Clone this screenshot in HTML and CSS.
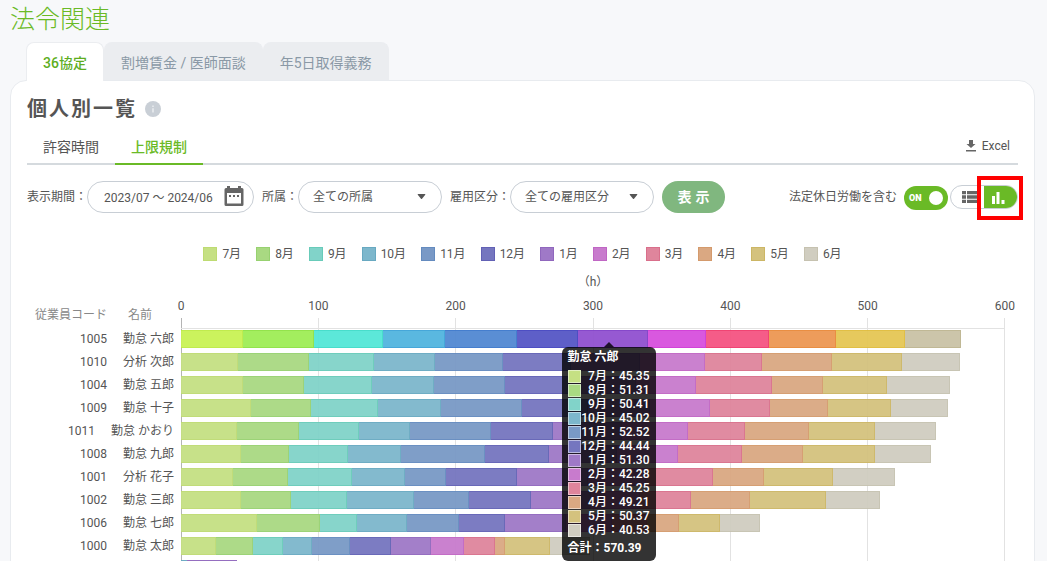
FILE: index.html
```
<!DOCTYPE html>

<html lang="ja">
	<head>
		<meta charset="utf-8">
		<meta name="viewport" content="width=device-width, initial-scale=1">
		<title>法令関連</title>
		<link rel="stylesheet" href="styles.css">
	</head>

	<body>
		<h1 class="page-title">法令関連</h1>

		<nav class="tabs">
			<a class="tab active" href="#">36協定</a>
			<a class="tab" href="#">割増賃金 / 医師面談</a>
			<a class="tab" href="#">年5日取得義務</a>
		</nav>

		<main class="card">
			<div class="heading">
				<h2>個人別一覧</h2>
				<svg class="info" viewBox="0 0 16 16"><circle cx="8" cy="8" r="8" fill="#c9cfd6"/><path d="M7.2 4.4h1.6v1.6H7.2zM7.2 7.2h1.6v4.4H7.2z" fill="#e9ecef"/></svg>
			</div>

			<div class="subbar">
				<a class="subtab" href="#">許容時間</a>
				<a class="subtab active" href="#">上限規制</a>
				<button class="excel" type="button">
					<svg viewBox="0 0 12 12"><path d="M4 0h4v4h2.500L6 8 1.500 4H4zM1 10h10v1.500H1z" fill="#666"/></svg>
					Excel
				</button>
			</div>

			<form class="filters">
				<label for="period">表示期間：</label>
				<div class="field period">
					<input id="period" type="text" value="2023/07 ～ 2024/06">
					<svg class="calendar" viewBox="0 0 20 20"><path fill-rule="evenodd" d="M3 0h3v2h8V0h3v2h1q1.500 0 1.500 1.500v15Q19.500 20 18 20H2Q.5 20 .5 18.500v-15Q.5 2 2 2h1zM3 7v10.500h14V7zM5 9h2v2H5zM9 9h2v2H9zM13 9h2v2h-2z" fill="#666"/></svg>
				</div>
				<label for="dept">所属：</label>
				<div class="field">
					<select id="dept"><option>全ての所属</option></select>
					<svg class="arrow" viewBox="0 0 10 6"><path d="M1 0h8q1 .3.500 1L5.600 5.600q-.6.500-1.200 0L.5 1Q0 .3 1 0z" fill="#555"/></svg>
				</div>
				<label for="kind">雇用区分：</label>
				<div class="field">
					<select id="kind"><option>全ての雇用区分</option></select>
					<svg class="arrow" viewBox="0 0 10 6"><path d="M1 0h8q1 .3.500 1L5.600 5.600q-.6.500-1.200 0L.5 1Q0 .3 1 0z" fill="#555"/></svg>
				</div>
				<button class="show" type="button">表示</button>

				<div class="options">
					<label for="holiday">法定休日労働を含む</label>
					<div class="toggle">
						<input id="holiday" type="checkbox" checked>
						<span class="toggle-text">ON</span>
					</div>
					<div class="views">
						<button class="view" type="button" aria-label="表">
							<svg viewBox="0 0 17 12"><path d="M0 0h4v3.300H0zM5 0h12v3.300H5zM0 4.300h4v3.400H0zM5 4.300h12v3.400H5zM0 8.700h4V12H0zM5 8.700h12V12H5z" fill="#666"/></svg>
						</button>
						<button class="view active" type="button" aria-label="グラフ">
							<svg viewBox="0 0 14 12"><path d="M1 4h3v8H1zM5.500 0h3v12h-3zM10.500 8h3v4h-3z" fill="#fff"/></svg>
						</button>
						<span class="marker"></span>
					</div>
				</div>
			</form>

			<section class="chart">
				<ul class="legend" id="legend"></ul>
				<div class="unit">（h）</div>
				<div class="axis">
					<div class="axis-head"><span>従業員コード</span><span>名前</span></div>
					<div class="ticks">
						<span>0</span><span>100</span><span>200</span><span>300</span><span>400</span><span>500</span><span>600</span>
					</div>
				</div>
				<div class="plot">
					<div class="lines"><i></i><i></i><i></i><i></i><i></i><i></i></div>
					<div class="rows" id="rows"></div>
					<div class="tip">
						<b>勤怠 六郎</b>
						<ul id="tip"></ul>
						<b>合計：570.39</b>
					</div>
				</div>
			</section>
		</main>

		<script src="chart.js"></script>
	</body>
</html>
```
FILE: styles.css
```
* {
	box-sizing: border-box;
}
body {
	margin: 0;
	height: 100vh;
	overflow: hidden;
	background: #f7f8fa;
	color: #555;
	font-family: Roboto, "Noto Sans CJK JP", sans-serif;
	font-size: 12px;
	line-height: 16px;
}
a {
	color: inherit;
	text-decoration: none;
}
button, input, select {
	font: inherit;
	color: inherit;
	padding: 0;
	border: 0;
	background: none;
}
ul {
	list-style: none;
	margin: 0;
	padding: 0;
}
.page-title {
	margin: 0;
	padding: 0 10px;
	height: 42px;
	line-height: 40px;
	font-size: 25px;
	font-weight: 300;
	color: #6aba26;
}

/* tabs */
.tabs {
	display: flex;
	padding-left: 26px;
}
.tab {
	height: 38px;
	padding: 0 16px;
	border: 1px solid #ebedf0;
	border-bottom: 0;
	border-radius: 8px 8px 0 0;
	background: #ebedf0;
	color: #8a99a6;
	font-size: 14px;
	line-height: 40px;
}
.tab.active {
	position: relative;
	margin-bottom: -1px;
	height: 39px;
	background: #fff;
	color: #5eae1f;
	font-weight: 500;
}
.card {
	margin: 0 12px 0 10px;
	padding: 0 16px;
	border: 1px solid #e8ebef;
	border-radius: 16px;
	background: #fff;
}
.heading {
	display: flex;
	align-items: center;
	gap: 8px;
	padding-top: 12px;
}
.heading h2 {
	margin: 0;
	font-size: 20px;
	line-height: 32px;
	font-weight: 700;
	letter-spacing: 2px;
}
.info {
	width: 16px;
	height: 16px;
}

/* sub tabs */
.subbar {
	display: flex;
	height: 40px;
	border-bottom: 2px solid #d5dade;
}
.subtab {
	height: 40px;
	padding: 0 16px;
	font-size: 14px;
	line-height: 45px;
}
.subtab.active {
	border-bottom: 2px solid #6aba26;
	color: #6aba26;
	font-weight: 500;
}
.excel {
	display: flex;
	align-items: center;
	gap: 5px;
	margin-left: auto;
	padding: 4px 8px 0 0;
}
.excel svg {
	width: 12px;
	height: 12px;
}

/* filters */
.filters {
	display: flex;
	align-items: center;
	height: 32px;
	margin-top: 16px;
}
.field {
	position: relative;
	width: 144px;
	margin-right: 8px;
}
.field.period {
	width: 167px;
}
.field input, .field select {
	display: block;
	width: 100%;
	height: 32px;
	padding: 0 14px;
	border: 1px solid #c8ced5;
	border-radius: 16px;
	appearance: none;
	background: #fff;
}
.field input {
	padding: 0 16px 2px;
}
.calendar {
	position: absolute;
	right: 10px;
	top: 5px;
	width: 20px;
	height: 20px;
}
.arrow {
	position: absolute;
	right: 16px;
	top: 13px;
	width: 9px;
	height: 5px;
}
.show {
	width: 63px;
	height: 32px;
	border-radius: 16px;
	background: #80b77f;
	color: #fff;
	font-size: 14px;
	font-weight: 700;
	letter-spacing: 4px;
	text-indent: 4px;
}
.options {
	display: flex;
	align-items: center;
	margin-left: auto;
}
.toggle {
	position: relative;
	margin: 2px 2px 0 7px;
}
.toggle input {
	display: flex;
	align-items: center;
	justify-content: flex-end;
	width: 44px;
	height: 24px;
	margin: 0;
	padding: 0 5px;
	appearance: none;
	border-radius: 12px;
	background: #6aba26;
}
.toggle input::before {
	content: "";
	width: 14px;
	height: 14px;
	border-radius: 7px;
	background: #fff;
}
.toggle-text {
	position: absolute;
	left: 5px;
	top: 4px;
	color: #fff;
	font-size: 9px;
	font-weight: 900;
	pointer-events: none;
}
.views {
	position: relative;
	display: flex;
	width: 68px;
	height: 24px;
	border: 1px solid #c8ced5;
	border-radius: 12px;
}
.view {
	flex: 1;
	display: flex;
	align-items: center;
	justify-content: flex-end;
}
.view svg {
	width: 17px;
	height: 12px;
	margin-right: 5px;
}
.view.active {
	justify-content: center;
	border-radius: 0 11px 11px 0;
	background: #6aba26;
}
.view.active svg {
	width: 14px;
	margin: 2px 5px 0 0;
}
.marker {
	position: absolute;
	left: 26px;
	top: -10px;
	width: 46px;
	height: 44px;
	border: 4px solid #f00;
}

/* chart */
.chart {
	padding-top: 33px;
}
.legend {
	display: flex;
	justify-content: center;
	gap: 15px;
}
.legend li {
	display: flex;
	align-items: center;
	gap: 5px;
}
.swatch {
	width: 14px;
	height: 14px;
	border: 1px solid var(--line);
	background: var(--fill);
}
.unit {
	padding: 12px 13px 0 154px;
	text-align: center;
}
.axis {
	display: flex;
	padding: 8px 13px 0 0;
	height: 28px;
}
.axis-head {
	display: flex;
	gap: 21px;
	width: 154px;
	padding: 9px 0 0 8px;
	color: #888;
}
.ticks {
	flex: 1;
	display: flex;
	justify-content: space-between;
}
.ticks span {
	display: flex;
	justify-content: center;
	width: 0;
}
.plot {
	position: relative;
	padding: 10px 13px 0 0;
}
.lines {
	position: absolute;
	top: 0;
	bottom: 0;
	left: 154px;
	right: 13px;
	display: flex;
	border-right: 1px solid #e2e2e2;
}
.lines i {
	flex: 1;
	border-left: 1px solid #e2e2e2;
}
.lines i:first-child {
	border-color: #b4b4b4;
}
.rows {
	position: relative;
	display: grid;
	grid-auto-rows: 1fr;
	height: 252px;
}
.rows::before {
	content: "";
	position: absolute;
	top: 0;
	left: 154px;
	right: 0;
	border-top: 1px solid #e2e2e2;
}
.row {
	display: flex;
	align-items: center;
}
.who {
	display: flex;
	justify-content: flex-end;
	gap: 16px;
	width: 154px;
	padding-right: 7px;
	white-space: pre;
}
.bar {
	position: relative;
	flex: 1;
	display: flex;
	height: 18px;
	opacity: 0.95;
}
.bar i {
	border: 1px solid var(--line);
	border-left: 0;
	background: var(--fill);
}

.m7 { --fill: #c5e083; --line: #bedb72; }
.m8 { --fill: #a9d982; --line: #97d170; }
.m9 { --fill: #81d3c9; --line: #68cbb9; }
.m10 { --fill: #7db7cc; --line: #68a9c1; }
.m11 { --fill: #7999c6; --line: #648bbf; }
.m12 { --fill: #7576bf; --line: #6261b5; }
.m1 { --fill: #9f79c7; --line: #9067bd; }
.m2 { --fill: #c87bcd; --line: #c066c4; }
.m3 { --fill: #df859c; --line: #d96f8b; }
.m4 { --fill: #daa882; --line: #d49a6c; }
.m5 { --fill: #d4c27e; --line: #ccb665; }
.m6 { --fill: #d0cdc0; --line: #c6c2b0; }

/* hovered row */
.on .m7 { --fill: #c9f355; --line: #bdea45; }
.on .m8 { --fill: #9fee56; --line: #8ee243; }
.on .m9 { --fill: #54e7d8; --line: #3fdcc9; }
.on .m10 { --fill: #52b5df; --line: #3da3d8; }
.on .m11 { --fill: #5289d2; --line: #3c78cc; }
.on .m12 { --fill: #5657c6; --line: #4445c0; }
.on .m1 { --fill: #9151d0; --line: #803fc8; }
.on .m2 { --fill: #d850de; --line: #d038d6; }
.on .m3 { --fill: #f55482; --line: #f03a6c; }
.on .m4 { --fill: #ed9753; --line: #e88838; }
.on .m5 { --fill: #e5c755; --line: #e0bc3c; }
.on .m6 { --fill: #cac2a6; --line: #bdb590; }

/* tooltip */
.tip {
	position: absolute;
	left: calc(50% + 39px);
	top: 29px;
	width: 94px;
	height: 214px;
	padding: 2px 6px;
	border-radius: 6px;
	background: rgba(0, 0, 0, 0.8);
	color: #fff;
	font-weight: 500;
}
.tip::before {
	content: "";
	position: absolute;
	left: 42px;
	top: -5px;
	border: 5px solid transparent;
	border-top: 0;
	border-bottom-color: rgba(0, 0, 0, 0.8);
}
.tip b {
	display: block;
}
.tip ul {
	padding: 4px 0 3px;
}
.tip li {
	display: flex;
	align-items: center;
	justify-content: space-between;
	height: 14px;
}
.tip .swatch {
	border-color: rgba(255, 255, 255, 0.5);
	width: 13px;
	height: 13px;
}
```
FILE: chart.js
```
var months = [7, 8, 9, 10, 11, 12, 1, 2, 3, 4, 5, 6];
var max = 600;

var people = [
	['1005', '勤怠 六郎', [45.35, 51.31, 50.41, 45.02, 52.52, 44.44, 51.30, 42.28, 45.25, 49.21, 50.37, 40.53]],
	['1010', '分析 次郎', [41.6, 51.4, 47.8, 44.3, 49.7, 49.2, 50.3, 47.2, 41.6, 51.0, 51.3, 41.6]],
	['1004', '勤怠 五郎', [45.3, 44.5, 49.6, 45.2, 51.3, 47.4, 48.1, 43.5, 55.4, 37.4, 46.1, 46.2]],
	['1009', '勤怠 十子', [51.2, 43.7, 48.6, 46.2, 58.3, 48.1, 45.2, 43.8, 44.0, 42.3, 45.9, 41.3]],
	['1011', '勤怠 かおり', [40.5, 45.7, 43.4, 37.5, 58.3, 45.2, 50.5, 47.9, 41.8, 46.4, 48.3, 44.3]],
	['1008', '勤怠 九郎', [43.9, 35.0, 43.0, 38.3, 61.5, 46.4, 49.4, 44.5, 46.7, 44.3, 52.2, 41.1]],
	['1001', '分析 花子', [38.1, 39.8, 46.9, 38.3, 30.2, 51.5, 51.5, 42.3, 48.6, 37.4, 50.3, 45.2]],
	['1002', '勤怠 三郎', [43.9, 35.9, 41.0, 48.8, 40.1, 45.5, 43.7, 35.2, 37.2, 42.8, 55.4, 39.4]],
	['1006', '勤怠 七郎', [55.3, 46.2, 26.7, 36.2, 38.4, 33.0, 44.5, 33.5, 25.5, 23.1, 29.9, 29.2]],
	['1000', '勤怠 太郎', [25.7, 27.0, 21.4, 21.4, 27.3, 30.1, 29.2, 24.3, 22.2, 7.3, 32.8, 29.0]],
	['', '', [0, 0, 0, 4.5, 0, 0, 36.5, 0, 0, 0, 0, 0]]
];

var legend = '';
var tip = '';
for(var i = 0; i < months.length; i++)
{
	var label = months[i] + '月';
	var swatch = '<span class="swatch m' + months[i] + '"></span>';
	legend += '<li>' + swatch + label + '</li>';
	tip += '<li>' + swatch + '<span>' + label + '：' + people[0][2][i].toFixed(2) + '</span></li>';
}
document.getElementById('legend').innerHTML = legend;
document.getElementById('tip').innerHTML = tip;

var rows = '';
for(var p = 0; p < people.length; p++)
{
	rows += '<div class="row' + (p == 0 ? ' on' : '') + '"><div class="who"><span>' + people[p][0] + '</span><span>' + people[p][1] + '</span></div><div class="bar">';
	for(var m = 0; m < months.length; m++)
	{
		if(people[p][2][m] > 0)
			rows += '<i class="m' + months[m] + '" style="width:' + (people[p][2][m] / max * 100) + '%"></i>';
	}
	rows += '</div></div>';
}
document.getElementById('rows').innerHTML = rows;
```
